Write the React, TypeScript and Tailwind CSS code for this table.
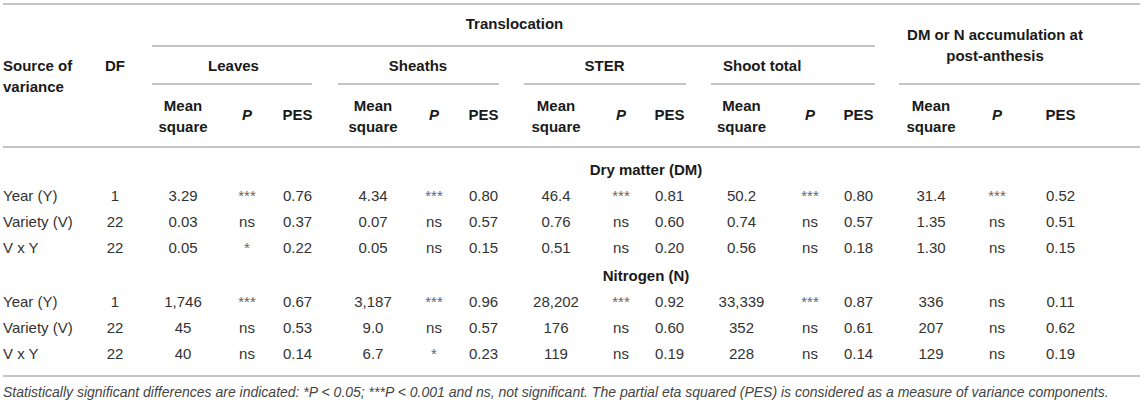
import React from "react";

const LINE = "bg-[#c4c4c4] h-[2px]";

type Row = [string, string, string[]];

const dm: Row[] = [
  ["Year (Y)", "1", ["3.29", "***", "0.76", "4.34", "***", "0.80", "46.4", "***", "0.81", "50.2", "***", "0.80", "31.4", "***", "0.52"]],
  ["Variety (V)", "22", ["0.03", "ns", "0.37", "0.07", "ns", "0.57", "0.76", "ns", "0.60", "0.74", "ns", "0.57", "1.35", "ns", "0.51"]],
  ["V x Y", "22", ["0.05", "*", "0.22", "0.05", "ns", "0.15", "0.51", "ns", "0.20", "0.56", "ns", "0.18", "1.30", "ns", "0.15"]],
];

const nit: Row[] = [
  ["Year (Y)", "1", ["1,746", "***", "0.67", "3,187", "***", "0.96", "28,202", "***", "0.92", "33,339", "***", "0.87", "336", "ns", "0.11"]],
  ["Variety (V)", "22", ["45", "ns", "0.53", "9.0", "ns", "0.57", "176", "ns", "0.60", "352", "ns", "0.61", "207", "ns", "0.62"]],
  ["V x Y", "22", ["40", "ns", "0.14", "6.7", "*", "0.23", "119", "ns", "0.19", "228", "ns", "0.14", "129", "ns", "0.19"]],
];

const COLS =
  "grid grid-cols-[87px_50px_86px_42px_59px_92px_30px_69px_76px_54px_43px_101px_36px_61px_84px_48px_79px_40px]";

function DataRow({ r, h }: { r: Row; h: string }) {
  return (
    <>
      <div className={`${h} whitespace-nowrap`}>{r[0]}</div>
      <div className={`${h} text-center`}>{r[1]}</div>
      {r[2].map((v, i) => (
        <div key={i} className={`${h} text-center whitespace-nowrap ${v.includes("*") ? "text-[#666]" : ""}`}>
          {v}
        </div>
      ))}
      <div className={h}></div>
    </>
  );
}

function SubHeadPlaced() {
  const starts = [
    ["col-start-3", "col-start-4", "col-start-5"],
    ["col-start-6", "col-start-7", "col-start-8"],
    ["col-start-9", "col-start-10", "col-start-11"],
    ["col-start-12", "col-start-13", "col-start-14"],
    ["col-start-15", "col-start-16", "col-start-17"],
  ];
  return (
    <>
      {starts.map((s, g) => (
        <React.Fragment key={g}>
          <div className={`row-start-6 ${s[0]} flex items-center justify-center text-center leading-[21px]`}>
            <span>
              Mean
              <br />
              square
            </span>
          </div>
          <div className={`row-start-6 ${s[1]} flex items-center justify-center italic`}>P</div>
          <div className={`row-start-6 ${s[2]} flex items-center justify-center`}>PES</div>
        </React.Fragment>
      ))}
    </>
  );
}

export default function App() {
  return (
    <div className="w-[1145px] h-[404px] bg-white font-['Liberation_Sans',Arial,sans-serif] pl-[3px] pt-[3px] overflow-hidden">
      <div className="w-[1137px]">
        {/* Header */}
        <div className={`${COLS} grid-rows-[2px_40px_2px_36px_2px_61px_2px] text-[15px] font-bold text-[#1a1a1a]`}>
          <div className={`row-start-1 col-span-full ${LINE}`}></div>

          <div className="row-start-2 col-start-3 col-end-15 text-center pt-[8px] leading-[21px]">Translocation</div>
          <div className={`row-start-3 col-start-3 col-end-15 ml-[12px] mr-[14px] ${LINE}`}></div>

          <div className="row-start-2 row-end-5 col-start-15 col-end-19 pl-[10px] pt-[19px] leading-[21px]">
            <div className="w-[192px] text-center">DM or N accumulation at post-anthesis</div>
          </div>

          <div className="row-start-4 row-end-7 col-start-1 pt-[8px] leading-[21px]">
            Source of
            <br />
            variance
          </div>
          <div className="row-start-4 row-end-7 col-start-2 pt-[8px] leading-[21px] text-center">DF</div>

          <div className="row-start-4 col-start-3 col-end-6 text-center pt-[8px] leading-[21px]">Leaves</div>
          <div className="row-start-4 col-start-6 col-end-9 text-center pt-[8px] pr-[9px] leading-[21px]">Sheaths</div>
          <div className="row-start-4 col-start-9 col-end-12 text-center pt-[8px] leading-[21px]">STER</div>
          <div className="row-start-4 col-start-12 col-end-15 pl-[32px] pt-[8px] leading-[21px]">Shoot total</div>

          <div className={`row-start-5 col-start-3 col-end-6 ml-[12px] mr-[15px] ${LINE}`}></div>
          <div className={`row-start-5 col-start-6 col-end-9 ml-[11px] mr-[19px] ${LINE}`}></div>
          <div className={`row-start-5 col-start-9 col-end-12 ml-[6px] mr-[5px] ${LINE}`}></div>
          <div className={`row-start-5 col-start-12 col-end-15 ml-[20px] mr-[14px] ${LINE}`}></div>
          <div className={`row-start-5 col-start-15 col-end-19 ml-[10px] ${LINE}`}></div>

          <SubHeadPlaced />

          <div className={`row-start-7 col-span-full ${LINE}`}></div>
        </div>

        {/* Body */}
        <div className={`${COLS} text-[15px] text-[#333] mt-[8px]`}>
          <div className="col-start-3 col-end-19 pl-[12px] text-center font-bold text-[#1a1a1a] leading-[27px] h-[27px]">
            Dry matter (DM)
          </div>
          {dm.map((r, i) => (
            <DataRow key={"d" + i} r={r} h="h-[26px] leading-[26px]" />
          ))}
          <div className="col-start-3 col-end-19 pl-[12px] text-center font-bold text-[#1a1a1a] leading-[28px] h-[28px] pt-[1px]">
            Nitrogen (N)
          </div>
          {nit.map((r, i) => (
            <DataRow key={"n" + i} r={r} h="h-[26px] leading-[26px]" />
          ))}
        </div>

        <div className={`mt-[8px] ${LINE}`}></div>
        <div className="mt-[5px] text-[14px] italic text-[#444] leading-[20px] whitespace-nowrap">
          Statistically significant differences are indicated: *P &lt; 0.05; ***P &lt; 0.001 and ns, not significant. The
          partial eta squared (PES) is considered as a measure of variance components.
        </div>
      </div>
    </div>
  );
}
